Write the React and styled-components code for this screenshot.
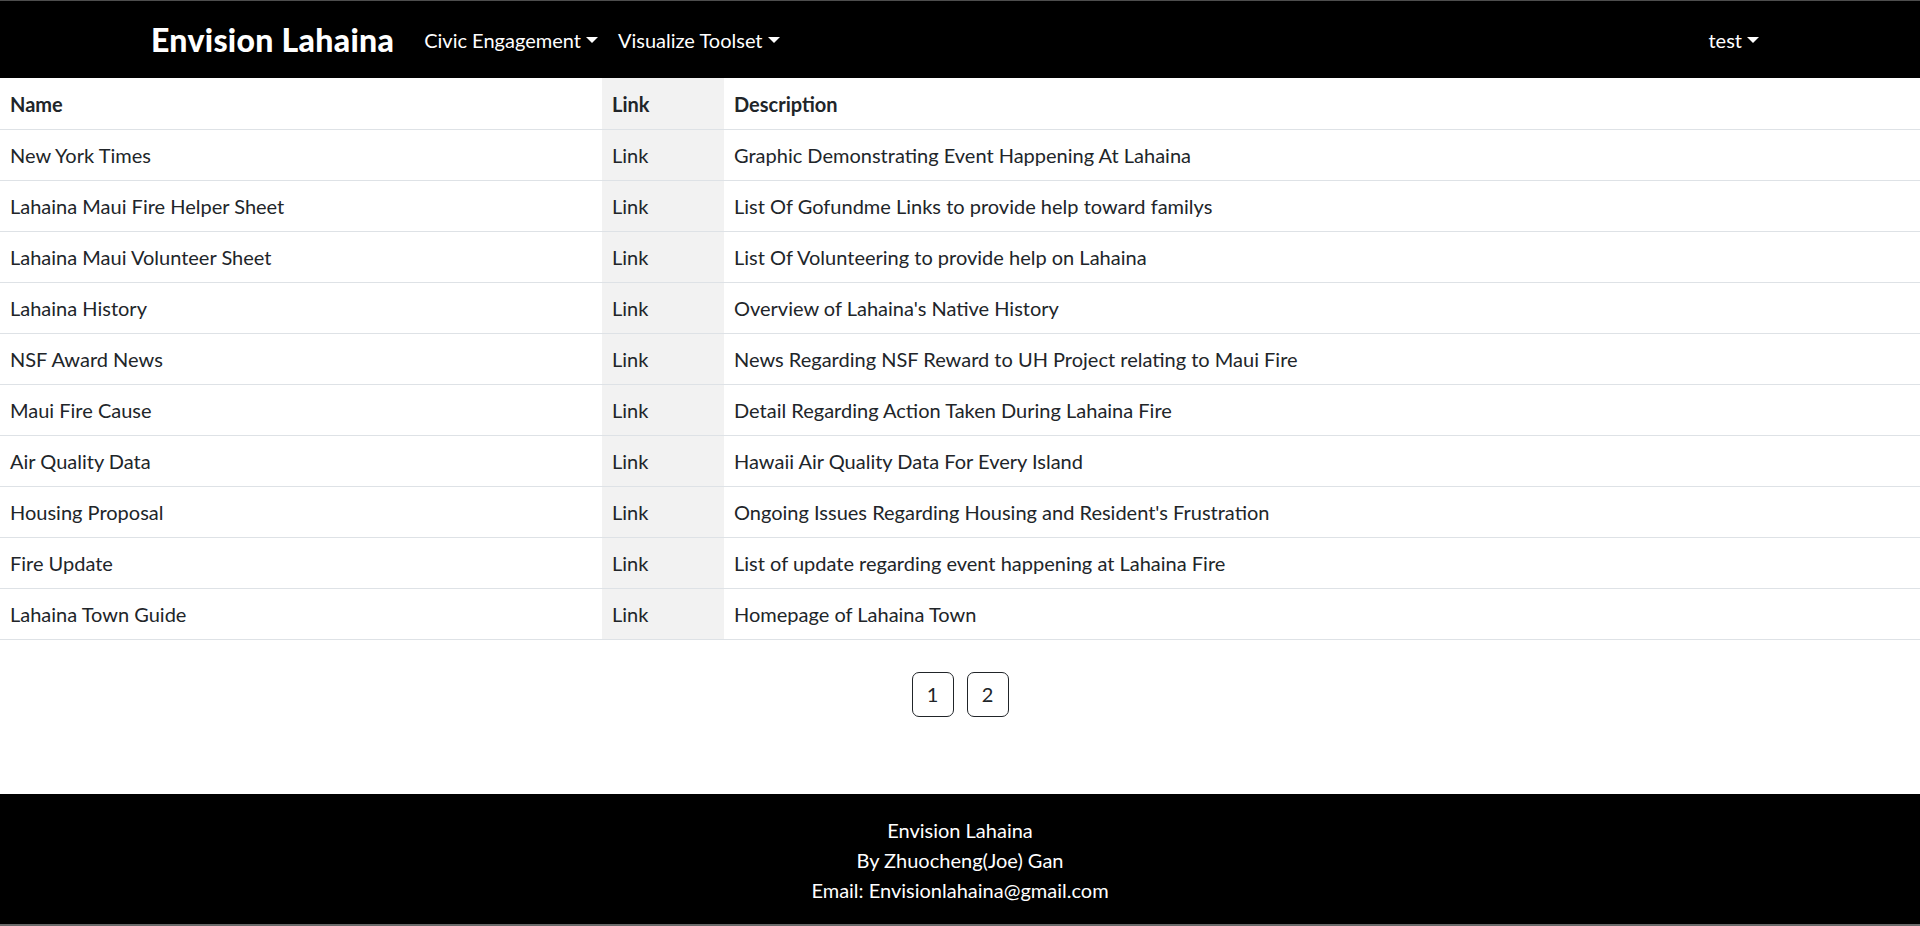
import React from "react";
import styled, { createGlobalStyle } from "styled-components";

const GlobalStyle = createGlobalStyle`
  * { box-sizing: border-box; }
  html, body { margin: 0; padding: 0; background: #fff; }
  body {
    font-family: "Segoe UI", Lato, "Liberation Sans", sans-serif;
    font-size: 20px;
    line-height: 30px;
    color: #212529;
  }
`;

const Page = styled.div`
  display: flex;
  flex-direction: column;
  min-height: 926px;
`;

const NavBar = styled.nav`
  background: #000;
  border-top: 1px solid #4d4d4d;
  height: 78px;
  display: flex;
  align-items: center;
  padding: 0 151px 0 151px;
`;

const Brand = styled.a`
  color: #fff;
  font-weight: 900;
  font-size: 32px;
  letter-spacing: 0.3px;
  line-height: 40px;
  margin-right: 20px;
  text-decoration: none;
  white-space: nowrap;
`;

const NavList = styled.div`
  display: flex;
  align-items: center;
  flex: 1;
`;

const Spacer = styled.div`
  flex: 1;
`;

const NavLink = styled.a`
  color: #fff;
  font-size: 20px;
  line-height: 30px;
  padding: 0 10px;
  text-decoration: none;
  white-space: nowrap;
  display: flex;
  align-items: center;
  &::after {
    content: "";
    display: inline-block;
    margin-left: 5px;
    border-top: 6px solid #fff;
    border-left: 6px solid transparent;
    border-right: 6px solid transparent;
    border-bottom: 0;
  }
`;

const Table = styled.table`
  width: 100%;
  border-collapse: collapse;
  table-layout: fixed;
`;

const Col = styled.col`
  width: ${(p) => p.$w || "auto"};
`;

const HeadCell = styled.th`
  text-align: left;
  font-weight: 700;
  padding: 11px 10px 9px;
  border-bottom: 1px solid #dee2e6;
  height: 51px;
  background: ${(p) => (p.$shade ? "#f2f2f2" : "transparent")};
`;

const Cell = styled.td`
  padding: 10px 10px;
  border-bottom: 1px solid #dee2e6;
  height: 51px;
  font-weight: 400;
  background: ${(p) => (p.$shade ? "#f2f2f2" : "transparent")};
`;

const Pager = styled.div`
  display: flex;
  justify-content: center;
  gap: 13px;
  margin: 32px 0 60px;
`;

const PageButton = styled.button`
  width: 42px;
  height: 45px;
  border: 1px solid #212529;
  border-radius: 7px;
  background: #fff;
  color: #212529;
  font-family: inherit;
  font-size: 20px;
  line-height: 30px;
  padding: 0;
`;

const Footer = styled.footer`
  margin-top: auto;
  background: #000;
  color: #fff;
  text-align: center;
  padding: 21px 0 19px;
  border-bottom: 2px solid #6b6b6b;
`;

const FooterLine = styled.div`
  font-size: 20px;
  line-height: 30px;
`;

const rows = [
  ["New York Times", "Graphic Demonstrating Event Happening At Lahaina"],
  ["Lahaina Maui Fire Helper Sheet", "List Of Gofundme Links to provide help toward familys"],
  ["Lahaina Maui Volunteer Sheet", "List Of Volunteering to provide help on Lahaina"],
  ["Lahaina History", "Overview of Lahaina's Native History"],
  ["NSF Award News", "News Regarding NSF Reward to UH Project relating to Maui Fire"],
  ["Maui Fire Cause", "Detail Regarding Action Taken During Lahaina Fire"],
  ["Air Quality Data", "Hawaii Air Quality Data For Every Island"],
  ["Housing Proposal", "Ongoing Issues Regarding Housing and Resident's Frustration"],
  ["Fire Update", "List of update regarding event happening at Lahaina Fire"],
  ["Lahaina Town Guide", "Homepage of Lahaina Town"],
];

export default function App() {
  return (
    <>
      <GlobalStyle />
      <Page>
        <NavBar>
          <Brand href="#">Envision Lahaina</Brand>
          <NavList>
            <NavLink href="#">Civic Engagement</NavLink>
            <NavLink href="#">Visualize Toolset</NavLink>
            <Spacer />
            <NavLink href="#">test</NavLink>
          </NavList>
        </NavBar>
        <Table>
          <colgroup>
            <Col $w="602px" />
            <Col $w="122px" />
            <Col />
          </colgroup>
          <thead>
            <tr>
              <HeadCell>Name</HeadCell>
              <HeadCell $shade>Link</HeadCell>
              <HeadCell>Description</HeadCell>
            </tr>
          </thead>
          <tbody>
            {rows.map(([name, desc]) => (
              <tr key={name}>
                <Cell>{name}</Cell>
                <Cell $shade>Link</Cell>
                <Cell>{desc}</Cell>
              </tr>
            ))}
          </tbody>
        </Table>
        <Pager>
          <PageButton>1</PageButton>
          <PageButton>2</PageButton>
        </Pager>
        <Footer>
          <FooterLine>Envision Lahaina</FooterLine>
          <FooterLine>By Zhuocheng(Joe) Gan</FooterLine>
          <FooterLine>Email: Envisionlahaina@gmail.com</FooterLine>
        </Footer>
      </Page>
    </>
  );
}
